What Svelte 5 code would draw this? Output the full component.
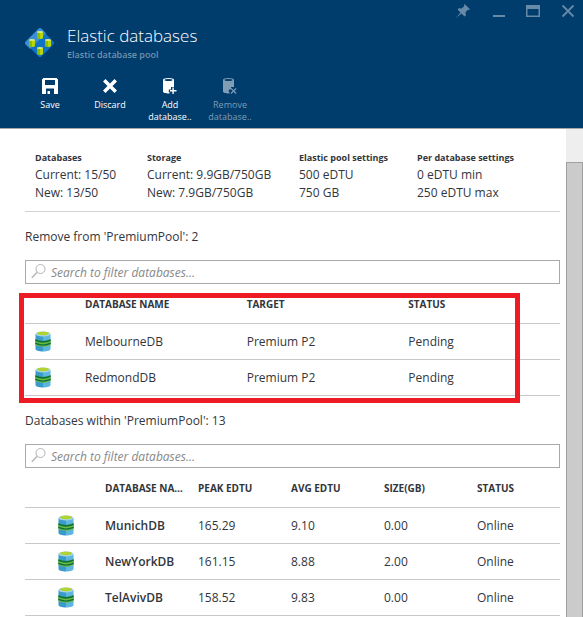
<script>
  const actions = [
    { id: 'save', lines: ['Save'] },
    { id: 'discard', lines: ['Discard'] },
    { id: 'add', lines: ['Add', 'database..'] },
    { id: 'remove', lines: ['Remove', 'database..'], disabled: true }
  ];

  const summary = [
    { label: 'Databases', values: ['Current: 15/50', 'New: 13/50'] },
    { label: 'Storage', values: ['Current: 9.9GB/750GB', 'New: 7.9GB/750GB'] },
    { label: 'Elastic pool settings', values: ['500 eDTU', '750 GB'] },
    { label: 'Per database settings', values: ['0 eDTU min', '250 eDTU max'] }
  ];

  const removed = [
    ['MelbourneDB', 'Premium P2', 'Pending'],
    ['RedmondDB', 'Premium P2', 'Pending']
  ];

  const pool = [
    ['MunichDB', '165.29', '9.10', '0.00', 'Online'],
    ['NewYorkDB', '161.15', '8.88', '2.00', 'Online'],
    ['TelAvivDB', '158.52', '9.83', '0.00', 'Online']
  ];

  let removeFilter = $state('');
  let poolFilter = $state('');

  const matching = (rows, text) =>
    rows.filter((row) => row[0].toLowerCase().includes(text.toLowerCase()));
</script>

{#snippet dbIcon()}
  <svg class="db" width="16" height="21" viewBox="0 0 16 21" aria-hidden="true">
    <path d="M.5 3v15c0 1.500 3 2.500 7.500 2.500V3z" fill="#3a9bcb" />
    <path d="M15.500 3v15c0 1.500-3 2.500-7.500 2.500V3z" fill="#5db5e0" />
    <ellipse cx="8" cy="3" rx="7.500" ry="2.600" fill="#a5d6ee" />
    <ellipse cx="8" cy="2.300" rx="6" ry="1.900" fill="#b1d235" />
    <path d="M.3 8.300q7.700 3.600 15.400 0v5.700q-7.700 3.600-15.400 0z" fill="#6fba3c" />
    <path d="M.3 8.300q7.700 3.600 15.400 0v1.600q-7.700 3.600-15.400 0zM.3 11.600q7.700 3.600 15.400 0v1.400q-7.700 3.600-15.400 0z" fill="#0a7040" />
  </svg>
{/snippet}

{#snippet cylinder(x, y)}
  <path d="M{x} {y + 1}h3v7q-3 0-3-1.200z" fill="#8dbb00" />
  <path d="M{x + 3} {y + 1}h3v5.800q0 1.200-3 1.200z" fill="#b8d60a" />
  <ellipse cx={x + 3} cy={y + 1} rx="3" ry="1" fill="#dcec80" />
{/snippet}

{#snippet lens()}
  <svg class="lens" width="16" height="16" viewBox="0 0 16 16" fill="none" stroke="#b4b4b4" aria-hidden="true">
    <circle cx="9.500" cy="5" r="4.500" />
    <path d="M6.300 8.300L.8 13.800" stroke-width="1.300" />
  </svg>
{/snippet}

<div class="blade">
  <header>
    <div class="window-controls">
      <button aria-label="Pin">
        <svg width="14" height="14" viewBox="0 0 14 14" fill="currentColor">
          <path d="M8.600 0l5.400 5.200-1.200.7-.9-.2-2.300 2.500.2 3.200-1.200 1L5.400 9.500 0 14l4.400-5.400L1.600 5.400l1-1.100 3.100.1L8.300 2.100 8 1z" />
        </svg>
      </button>
      <button aria-label="Minimize">
        <svg width="14" height="14" viewBox="0 0 14 14" fill="currentColor"><path d="M2 11h12v2H2z" /></svg>
      </button>
      <button aria-label="Maximize">
        <svg width="14" height="14" viewBox="0 0 14 14" fill="currentColor">
          <path d="M0 1h14v12H0zM1.500 5v6.500h11V5z" fill-rule="evenodd" />
        </svg>
      </button>
      <button aria-label="Close">
        <svg width="14" height="14" viewBox="0 0 14 14" fill="none" stroke="currentColor" stroke-width="1.800">
          <path d="M1.500 1.500l11 11M12.500 1.500l-11 11" />
        </svg>
      </button>
    </div>

    <div class="heading">
      <svg width="30" height="30" viewBox="0 0 30 30" aria-hidden="true">
        <rect x="4.500" y="4.500" width="21" height="21" rx="2" transform="rotate(45 15 15)" fill="#0f72c6" />
        <path d="M13.600.6q1.400-1.200 2.800 0L21 5.200 5.200 21 .6 16.400q-1.200-1.400 0-2.800z" fill="#3990d6" />
        {@render cylinder(12, 3)}
        {@render cylinder(4, 11)}
        {@render cylinder(20, 11)}
        {@render cylinder(12, 19)}
      </svg>
      <div>
        <h1>Elastic databases</h1>
        <p>Elastic database pool</p>
      </div>
    </div>

    <div class="toolbar">
      {#each actions as action (action.id)}
        <button disabled={action.disabled}>
          <svg width="16" height="16" viewBox="0 0 16 16" fill="currentColor" aria-hidden="true">
            {#if action.id === 'save'}
              <path d="M1.500 0h13L16 1.500V16H0V1.500zM3 2v5h10V2zM4 10.500V16h1.500v-3H8v3h4v-5.500z" fill-rule="evenodd" />
            {:else if action.id === 'discard'}
              <path d="M1 3.500L3.500 1 8 5.500 12.500 1 15 3.500 10.500 8l4.500 4.500-2.500 2.500L8 10.500 3.500 15 1 12.500 5.500 8z" />
            {:else}
              <path d="M1 1.800C1 .8 3.500 0 6.500 0S12 .8 12 1.800V9H9v2.500H6.800V14h.7v1.500C4 15.600 1 14.800 1 13.500z" />
              <ellipse cx="6.500" cy="2" rx="4" ry="1" fill="#003c6c" />
              {#if action.id === 'add'}
                <path d="M10.400 9.500h1.400v2.500h2.700v1.400h-2.700V16h-1.400v-2.600H8V12h2.400z" />
              {:else}
                <path d="M9 10.300l5.200 5.200M14.200 10.300L9 15.500" stroke="currentColor" stroke-width="1.200" />
              {/if}
            {/if}
          </svg>
          {#each action.lines as line}<span>{line}</span>{/each}
        </button>
      {/each}
    </div>
  </header>

  <div class="body">
    <main>
      <dl class="summary">
        {#each summary as item (item.label)}
          <div>
            <dt>{item.label}</dt>
            {#each item.values as value}<dd>{value}</dd>{/each}
          </div>
        {/each}
      </dl>

      <section>
        <h2>Remove from 'PremiumPool': 2</h2>
        <label class="search">
          {@render lens()}
          <input type="text" aria-label="Filter removed databases" placeholder="Search to filter databases..." bind:value={removeFilter} />
        </label>
        <div class="marked">
          <table>
            <thead>
              <tr>
                <th class="icon"></th>
                <th>DATABASE NAME</th>
                <th>TARGET</th>
                <th>STATUS</th>
              </tr>
            </thead>
            <tbody>
              {#each matching(removed, removeFilter) as row (row[0])}
                <tr>
                  <td class="icon">{@render dbIcon()}</td>
                  {#each row as cell}<td>{cell}</td>{/each}
                </tr>
              {/each}
            </tbody>
          </table>
        </div>
      </section>

      <section>
        <h2>Databases within 'PremiumPool': 13</h2>
        <label class="search">
          {@render lens()}
          <input type="text" aria-label="Filter pool databases" placeholder="Search to filter databases..." bind:value={poolFilter} />
        </label>
        <table class="pool">
          <thead>
            <tr>
              <th class="icon"></th>
              <th>DATABASE NAME</th>
              <th>PEAK EDTU</th>
              <th>AVG EDTU</th>
              <th>SIZE(GB)</th>
              <th>STATUS</th>
            </tr>
          </thead>
          <tbody>
            {#each matching(pool, poolFilter) as row (row[0])}
              <tr>
                <td class="icon">{@render dbIcon()}</td>
                {#each row as cell}<td>{cell}</td>{/each}
              </tr>
            {/each}
          </tbody>
        </table>
      </section>
    </main>
    <div class="scrollbar"><div class="thumb"></div></div>
  </div>
</div>

<style>
  .blade {
    display: flex;
    flex-direction: column;
    min-height: 100vh;
    background: #fff;
    color: #32363c;
    font: 12px/18px 'Open Sans', 'Noto Sans', sans-serif;
  }

  h1, h2, p, dl, dd {
    margin: 0;
    font-weight: 400;
  }

  button {
    padding: 0;
    border: 0;
    background: none;
    color: inherit;
    font: inherit;
  }

  svg {
    display: block;
    flex: none;
  }

  header {
    height: 128px;
    border-bottom: 1px solid #a6a6a6;
    background: #003c6c;
    color: #fff;
  }

  .window-controls {
    display: flex;
    justify-content: flex-end;
    gap: 21px;
    padding: 4px 8px 0 0;
    color: #668aa8;
  }

  .heading {
    display: flex;
    align-items: center;
    gap: 12px;
    padding: 6px 25px 0;
  }

  h1 {
    font-size: 17px;
    font-weight: 300;
    line-height: 24px;
  }

  .heading p {
    color: #7393b0;
    font-size: 9px;
    font-weight: 600;
    line-height: 14px;
  }

  .toolbar {
    display: flex;
    padding: 16px 20px 0;
  }

  .toolbar button {
    display: flex;
    flex-direction: column;
    align-items: center;
    width: 60px;
    font-size: 9px;
    font-weight: 500;
    line-height: 12px;
  }

  .toolbar svg {
    margin-bottom: 5px;
  }

  .toolbar button:disabled {
    color: #7f9db5;
  }

  .body {
    display: flex;
    flex: 1;
  }

  main {
    flex: 1;
    min-width: 0;
    padding: 0 6px 0 25px;
  }

  .scrollbar {
    display: flex;
    flex: none;
    width: 17px;
    padding-top: 33px;
    box-sizing: border-box;
    background: #eee;
  }

  .thumb {
    flex: 1;
    border: 1px solid #a0a0a0;
    border-bottom: 0;
    background: #cbcbcb;
  }

  .summary {
    display: grid;
    grid-template-columns: 112fr 152fr 118fr 143fr;
    padding: 21px 0 9px 10px;
    border-bottom: 1px solid #d2d2d2;
    white-space: nowrap;
  }

  dt {
    font-size: 9px;
    font-weight: 700;
    line-height: 16px;
  }

  h2 {
    padding: 16px 0 14px;
    font-size: 12px;
    line-height: 18px;
  }

  .search {
    display: flex;
    align-items: center;
    height: 22px;
    padding-left: 5px;
    border: 1px solid #aaa;
  }

  .search input {
    flex: 1;
    min-width: 0;
    height: 22px;
    padding: 0 4px;
    border: 0;
    outline: 0;
    background: none;
    color: inherit;
    font: italic 12px/18px 'Open Sans', 'Noto Sans', sans-serif;
  }

  .search input::placeholder {
    color: #888;
    opacity: 1;
  }

  .marked {
    position: relative;
  }

  .marked::after {
    content: '';
    position: absolute;
    top: 9px;
    right: 40px;
    bottom: -7px;
    left: -6px;
    border: 5px solid #ed1c24;
    pointer-events: none;
  }

  table {
    width: 100%;
    table-layout: fixed;
    border-collapse: separate;
    border-spacing: 0;
  }

  th, td {
    box-sizing: border-box;
    height: 36px;
    padding: 0 5px 0 10px;
    border-bottom: 1px solid #c8c8c8;
    overflow: hidden;
    text-align: left;
    text-overflow: ellipsis;
    white-space: nowrap;
  }

  th {
    height: 40px;
    font-size: 10px;
    font-weight: 700;
  }

  .icon {
    width: 50px;
  }

  .pool .icon {
    width: 70px;
    padding-left: 33px;
  }

  .pool td:nth-child(2) {
    font-weight: 600;
  }
</style>
